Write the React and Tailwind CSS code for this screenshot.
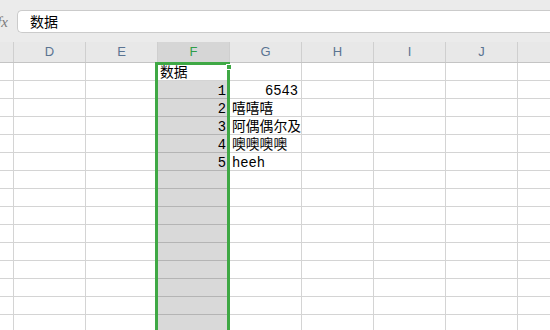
import React from 'react';

const cols = ['D', 'E', 'F', 'G', 'H', 'I', 'J'];

const data = [
  { f: '数据' },
  { f: '1', g: '6543', gAlign: 'right' },
  { f: '2', g: '嘻嘻嘻' },
  { f: '3', g: '阿偶偶尔及' },
  { f: '4', g: '噢噢噢噢' },
  { f: '5', g: 'heeh' },
];

const ROWS = 15;
const cellFont = { fontFamily: '"Liberation Mono", "Noto Sans CJK SC", monospace' };

function Cell({ width, children, align = 'left', sel, first }) {
  return (
    <div
      className={`h-[18px] shrink-0 border-r border-b border-[#d4d4d4] pt-[2px] text-[13.8px] leading-[17px] text-black whitespace-nowrap ${
        align === 'right' ? 'text-right pr-[3px]' : 'pl-[2px]'
      } ${sel && !first ? 'bg-[#d9d9d9] border-b-[#b4b4b4]' : 'bg-white'}`}
      style={{ width, ...cellFont }}
    >
      {children}
    </div>
  );
}

export default function App() {
  return (
    <div className="w-[550px] h-[330px] overflow-hidden bg-white flex flex-col">
      {/* formula bar */}
      <div className="h-[42px] bg-[#ebebeb] flex items-start pt-[10px] shrink-0">
        <div className="w-[17px] h-[23px] overflow-hidden flex items-center justify-end pr-[9px]">
          <span className="italic text-[15px] text-[#7a7a7a] pt-[2px]" style={{ fontFamily: '"Liberation Serif", serif' }}>fx</span>
        </div>
        <div
          className="flex-1 h-[23px] bg-white border border-r-0 border-[#cbcbcb] rounded-l-[5px] pl-[12px] text-[14px] leading-[21px] text-black"
          style={{ fontFamily: '"Noto Sans CJK SC", sans-serif' }}
        >
          数据
        </div>
      </div>

      {/* column headers */}
      <div className="h-[21px] bg-[#e8e8e8] border-b border-[#c4c4c4] flex shrink-0">
        <div className="w-[14px] border-r border-[#cfcfcf] shrink-0" />
        {cols.map((c) => (
          <div
            key={c}
            className={`w-[72px] shrink-0 border-r border-[#cfcfcf] flex items-center justify-center text-[13px] ${
              c === 'F' ? 'bg-[#d6d6d6] text-[#2f9e48]' : 'text-[#5a7492]'
            }`}
            style={{ fontFamily: '"Liberation Sans", Arial, sans-serif' }}
          >
            {c}
          </div>
        ))}
        <div className="flex-1" />
      </div>

      {/* grid */}
      <div className="flex flex-1">
        {[14, 72, 72].map((w, i) => (
          <div key={i} className="flex flex-col">
            {Array.from({ length: ROWS }).map((_, r) => (
              <Cell key={r} width={w} />
            ))}
          </div>
        ))}

        {/* F column, selected */}
        <div className="relative flex flex-col">
          {Array.from({ length: ROWS }).map((_, r) => {
            const d = data[r];
            return (
              <Cell key={r} width={72} sel first={r === 0} align={r === 0 ? 'left' : 'right'}>
                {d ? d.f : ''}
              </Cell>
            );
          })}
          <div className="absolute left-[-3px] right-0 top-[-1px] bottom-[-4px] border-[3px] border-[#3fa845] pointer-events-none" />
          <div className="absolute right-[-2px] top-[1px] w-[6px] h-[6px] bg-[#3fa845] border border-white" />
        </div>

        <div className="flex flex-col">
          {Array.from({ length: ROWS }).map((_, r) => {
            const d = data[r];
            return (
              <Cell key={r} width={72} align={d && d.gAlign ? 'right' : 'left'}>
                {d && d.g ? d.g : ''}
              </Cell>
            );
          })}
        </div>

        {[72, 72, 72].map((w, i) => (
          <div key={i} className="flex flex-col">
            {Array.from({ length: ROWS }).map((_, r) => (
              <Cell key={r} width={w} />
            ))}
          </div>
        ))}
        <div className="flex flex-col flex-1">
          {Array.from({ length: ROWS }).map((_, r) => (
            <div key={r} className="h-[18px] border-b border-[#d4d4d4]" />
          ))}
        </div>
      </div>
    </div>
  );
}
